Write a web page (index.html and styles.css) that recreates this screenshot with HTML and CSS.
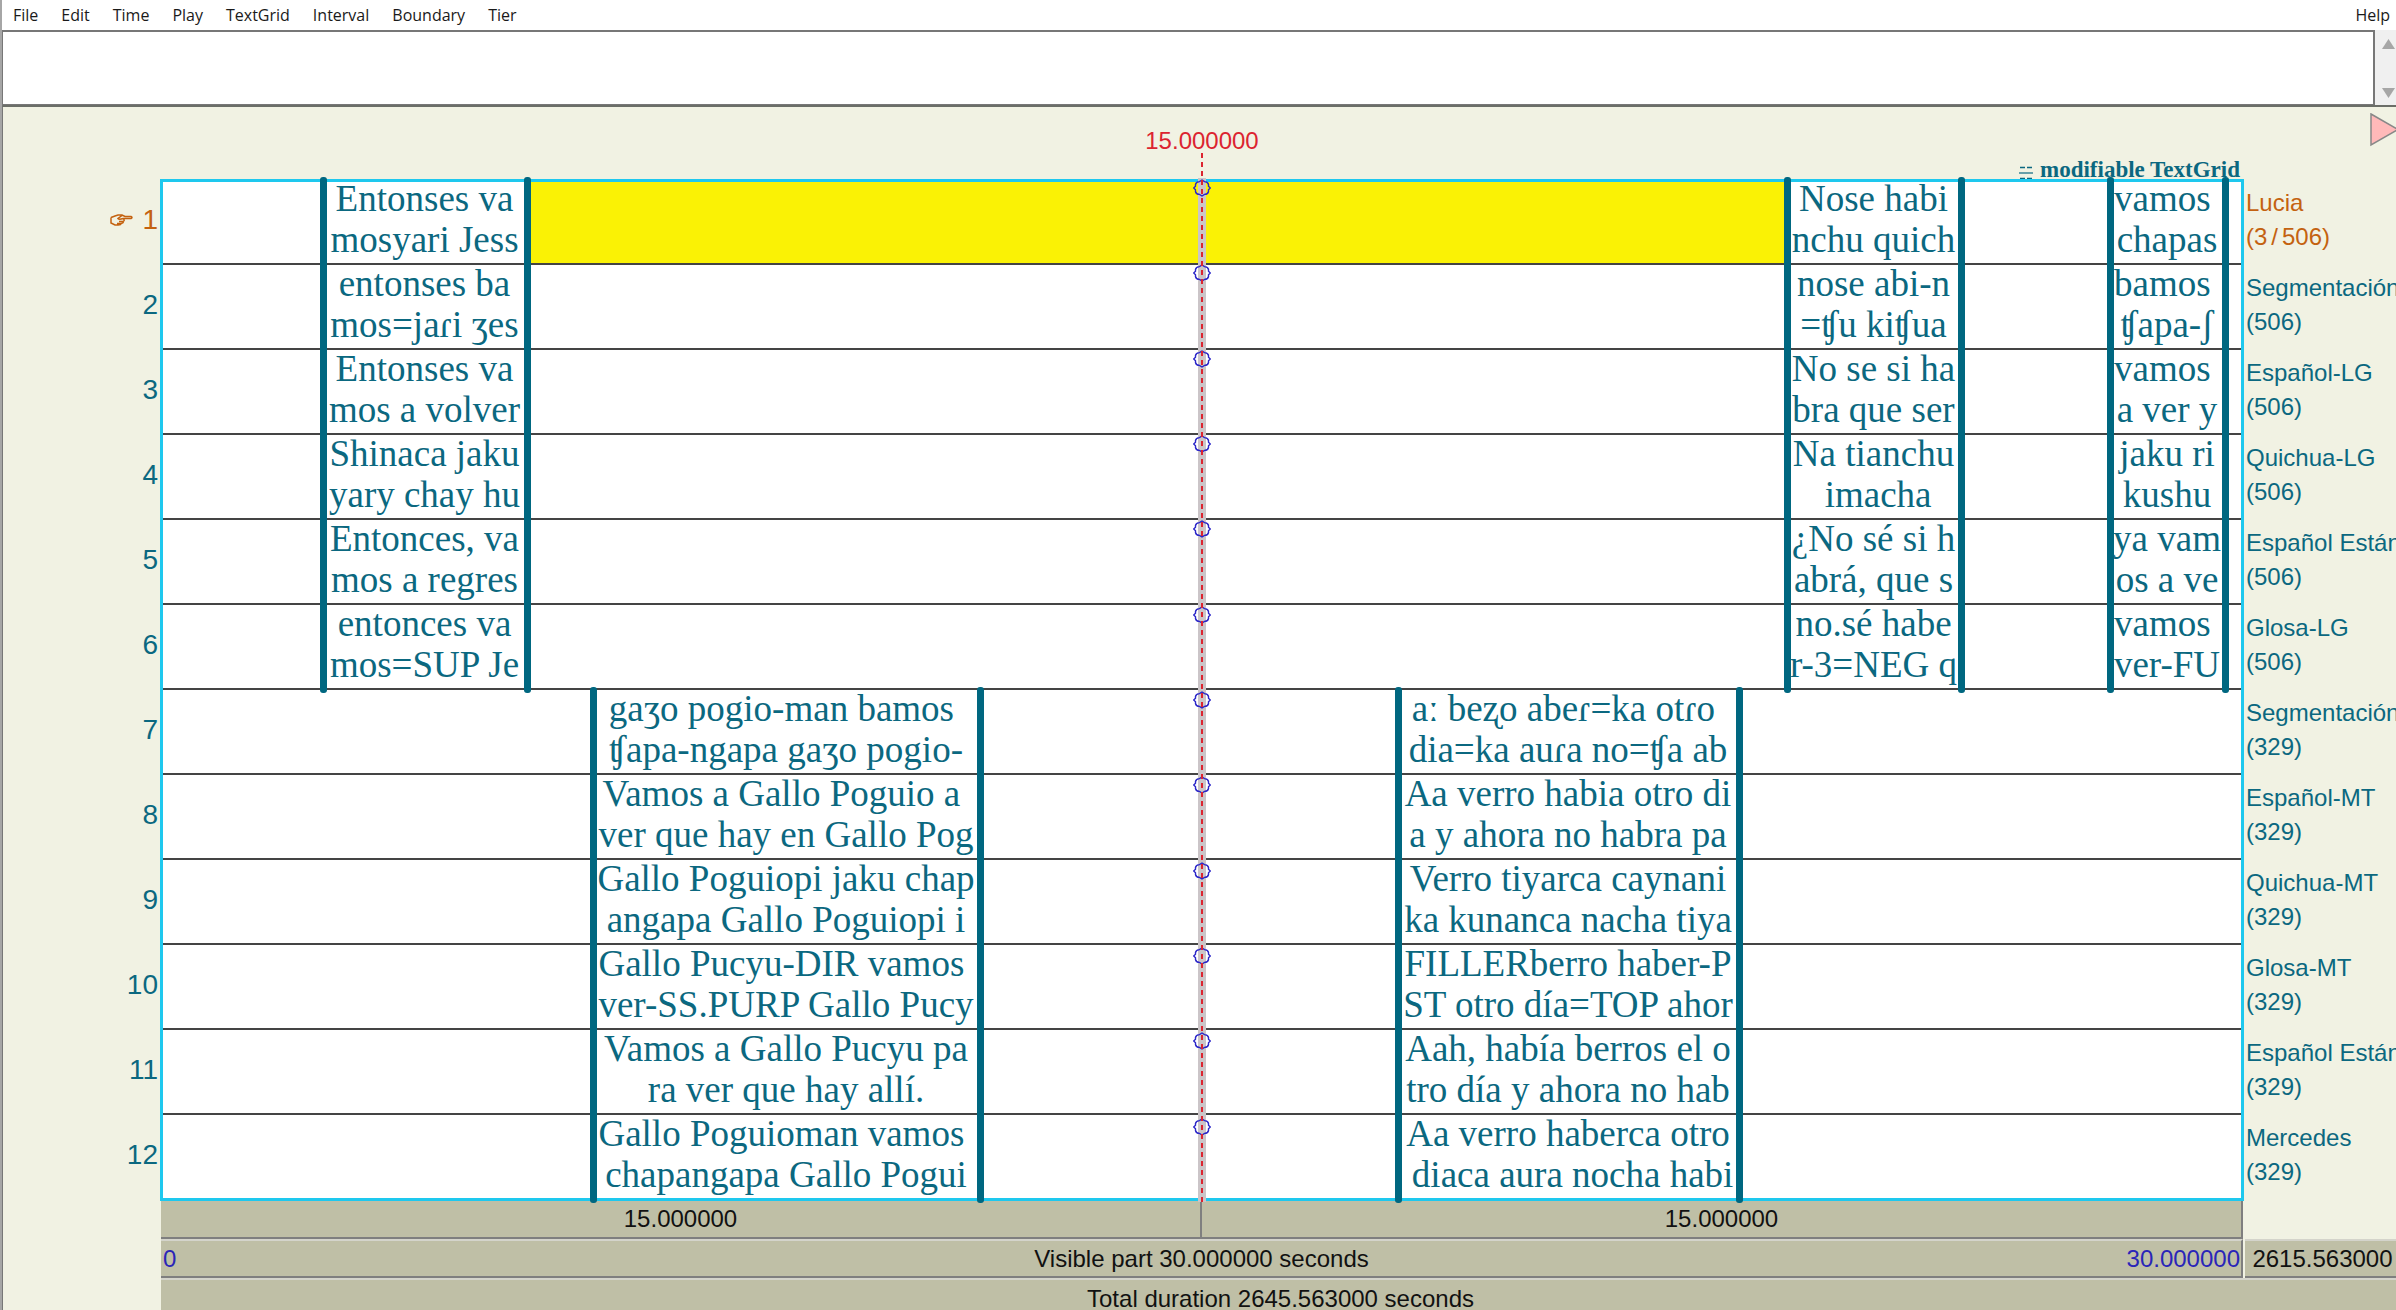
FILE: index.html
```html
<!DOCTYPE html>
<html lang="es">
<head>
<meta charset="utf-8">
<title>TextGrid</title>
<link rel="stylesheet" href="styles.css">
</head>
<body>
<svg width="0" height="0" class="symbols">
  <symbol id="knob" viewBox="0 0 18 18"><path d="M0.700 9L2.500 7.300V5.500Q3 2.800 6.500 2.600L9 1L11.500 2.600Q15 2.800 15.500 5.500V7.300L17.300 9L15.500 10.700V12.500Q15 15.200 11.500 15.400L9 17L6.500 15.400Q3 15.200 2.500 12.500V10.700Z" fill="none" stroke="#2a25c8" stroke-width="1.400"/></symbol>
</svg>
<nav class="menu">
  <button>File</button><button>Edit</button><button>Time</button><button>Play</button><button>TextGrid</button><button>Interval</button><button>Boundary</button><button>Tier</button><button class="menu-help">Help</button>
</nav>
<div class="text-row">
  <textarea class="label-text" aria-label="Interval text"></textarea>
  <div class="scroller">
    <button aria-label="Scroll up"><svg width="13" height="10" viewBox="0 0 13 10"><path d="M6.500 0L13 10H0z" fill="#a6a6a6"/></svg></button>
    <button aria-label="Scroll down"><svg width="13" height="10" viewBox="0 0 13 10"><path d="M0 0H13L6.500 10z" fill="#a6a6a6"/></svg></button>
  </div>
</div>
<main class="editor">
  <header class="plot-head">
    <span class="cursor-time">15.000000</span>
    <span class="grid-title"><svg width="14" height="14" viewBox="0 0 14 14" fill="none" stroke="#0b6880"><path d="M1 1.500H13M1 12.500H13" stroke-dasharray="5 2" stroke-width="1.500"/><path d="M0 7H14" stroke-width="2" opacity=".6"/></svg>modifiable TextGrid</span>
  </header>
  <button class="group-toggle" aria-label="Group"><svg width="28" height="34" viewBox="0 0 28 34"><path d="M1 1L28 16.500L1 32z" fill="#ffb9b9" stroke="#888" stroke-width="1.500"/></svg></button>
  <ol class="numbers">
    <li class="selected"><svg width="23" height="12" viewBox="0 0 23 12" fill="none" stroke="#c46210" stroke-width="1.500"><path d="M1 3.500L5 2L8 1H12L15 2.500H21Q23 3.500 21 4.500H13M12 1.500L8 4.500Q9 6 13 4.500M13 4.500Q15.500 6.500 13 7.500Q14 9 11 9.500Q11 11 8 11H5L1 9V3.500M9 7.500H13M7 9.500H11"/></svg>1</li>
    <li>2</li><li>3</li><li>4</li><li>5</li><li>6</li><li>7</li><li>8</li><li>9</li><li>10</li><li>11</li><li>12</li>
  </ol>
  <section class="plot">
    <div class="speaker lucia">
      <div class="tier"><p>Entonses va
mosyari Jess</p><p class="current"></p><p>Nose habi
nchu quich</p><p>vamos 
chapas</p></div>
      <div class="tier"><p>entonses ba
mos=jaɾi ʒes</p><p></p><p>nose abi-n
=ʧu kiʧua</p><p>bamos 
ʧapa-ʃ</p></div>
      <div class="tier"><p>Entonses va
mos a volver</p><p></p><p>No se si ha
bra que ser</p><p>vamos 
a ver y</p></div>
      <div class="tier"><p>Shinaca jaku
yary chay hu</p><p></p><p>Na tianchu
 imacha</p><p>jaku ri
kushu</p></div>
      <div class="tier"><p>Entonces, va
mos a regres</p><p></p><p>¿No sé si h
abrá, que s</p><p>ya vam
os a ve</p></div>
      <div class="tier"><p>entonces va
mos=SUP Je</p><p></p><p>no.sé habe
r-3=NEG q</p><p>vamos 
ver-FU</p></div>
      <div class="boundaries"><i></i><i></i><i></i><i></i><i></i><i></i></div>
    </div>
    <div class="speaker mercedes">
      <div class="tier"><p>gaʒo pogio-man bamos 
ʧapa-ngapa gaʒo pogio-</p><p>a<b>ː</b> beʐo abeɾ=ka otɾo 
dia=ka auɾa no=ʧa ab</p></div>
      <div class="tier"><p>Vamos a Gallo Poguio a 
ver que hay en Gallo Pog</p><p>Aa verro habia otro di
a y ahora no habra pa</p></div>
      <div class="tier"><p>Gallo Poguiopi jaku chap
angapa Gallo Poguiopi i</p><p>Verro tiyarca caynani
ka kunanca nacha tiya</p></div>
      <div class="tier"><p>Gallo Pucyu-DIR vamos 
ver-SS.PURP Gallo Pucy</p><p>FILLERberro haber-P
ST otro día=TOP ahor</p></div>
      <div class="tier"><p>Vamos a Gallo Pucyu pa
ra ver que hay allí.</p><p>Aah, había berros el o
tro día y ahora no hab</p></div>
      <div class="tier"><p>Gallo Poguioman vamos 
chapangapa Gallo Pogui</p><p>Aa verro haberca otro
 diaca aura nocha habi</p></div>
      <div class="boundaries"><i></i><i></i><i></i><i></i></div>
    </div>
    <div class="cursor">
      <svg><use href="#knob"/></svg><svg><use href="#knob"/></svg><svg><use href="#knob"/></svg><svg><use href="#knob"/></svg>
      <svg><use href="#knob"/></svg><svg><use href="#knob"/></svg><svg><use href="#knob"/></svg><svg><use href="#knob"/></svg>
      <svg><use href="#knob"/></svg><svg><use href="#knob"/></svg><svg><use href="#knob"/></svg><svg><use href="#knob"/></svg>
    </div>
  </section>
  <ul class="names">
    <li class="selected">Lucia<br>(3<span class="slash">/</span>506)</li>
    <li>Segmentación<br>(506)</li><li>Español-LG<br>(506)</li><li>Quichua-LG<br>(506)</li><li>Español Están<br>(506)</li><li>Glosa-LG<br>(506)</li>
    <li>Segmentación<br>(329)</li><li>Español-MT<br>(329)</li><li>Quichua-MT<br>(329)</li><li>Glosa-MT<br>(329)</li><li>Español Están<br>(329)</li><li>Mercedes<br>(329)</li>
  </ul>
  <div class="halves"><button class="bar">15.000000</button><button class="bar">15.000000</button></div>
  <button class="bar visible"><span class="time">0</span><span>Visible part 30.000000 seconds</span><span class="time">30.000000</span></button>
  <button class="bar rest">2615.563000</button>
  <button class="bar total">Total duration 2645.563000 seconds</button>
</main>
</body>
</html>
```
FILE: styles.css
```css
:root {
  --paper: #f1f2e3;
  --teal: #006780;
  --ink: #0b6880;
  --orange: #c46210;
  --bar: #bfbfa6;
}

* { box-sizing: border-box; margin: 0; padding: 0; }

body {
  display: flex;
  flex-direction: column;
  height: 100vh;
  overflow: hidden;
  background: var(--paper);
  border-left: 2px solid #a6a6a6;
  font-family: "Liberation Sans", Arial, sans-serif;
  font-size: 24px;
}

button { border: 0; background: none; font: inherit; color: inherit; }
ol, ul { list-style: none; }
svg { display: block; }
.symbols { position: absolute; }

.menu {
  flex: none;
  display: flex;
  gap: 23px;
  height: 30px;
  padding: 0 6px 0 11px;
  background: #fff;
  color: #1a1a1a;
  font-family: "Open Sans", "Noto Sans", sans-serif;
  font-size: 16px;
}
.menu-help { margin-left: auto; }

.text-row {
  flex: none;
  display: flex;
  height: 77px;
  background: #f0f0f0;
  border-left: 1px solid #777;
  border-bottom: 2px solid #6b6e68;
}
.label-text {
  flex: 1;
  border: 1px solid #777;
  border-width: 2px 2px 1px 0;
  background: #fff;
  resize: none;
  outline: none;
  font: inherit;
}
.scroller {
  width: 21px;
  display: flex;
  flex-direction: column;
  justify-content: space-between;
  padding: 9px 0 7px 7px;
}
.scroller button { height: 10px; }

.editor {
  flex: 1;
  min-height: 0;
  display: grid;
  grid-template-columns: 158px minmax(0, 1fr) 153px;
  grid-template-rows: 73px minmax(0, 1fr) 39px 39px 32px;
  border-left: 1px solid #777;
}

.plot-head {
  grid-column: 2;
  display: grid;
  grid-template-columns: 1fr auto 1fr;
  color: var(--ink);
}
.cursor-time {
  grid-column: 2;
  padding-top: 20px;
  line-height: 28px;
  color: #dc2430;
}
.grid-title {
  display: flex;
  align-items: center;
  justify-content: flex-end;
  gap: 7px;
  align-self: end;
  padding-right: 3px;
  line-height: 20px;
  font-family: "Liberation Serif", "Times New Roman", serif;
  font-weight: bold;
  font-size: 23px;
}
.grid-title svg { margin-top: 6px; }
.group-toggle {
  overflow: hidden;
  align-self: start;
  justify-self: end;
  width: 26px;
  margin-top: 6px;
}

.numbers, .names {
  display: grid;
  grid-template-rows: repeat(12, minmax(0, 1fr));
  color: var(--ink);
}
.numbers li {
  display: flex;
  align-items: center;
  justify-content: flex-end;
  gap: 9px;
  padding: 0 3px 5px 0;
  font-size: 28px;
}
.names li {
  display: flow-root;
  align-content: center;
  padding: 0 0 5px 3px;
  line-height: 34px;
  white-space: nowrap;
}
.numbers .selected, .names .selected { color: var(--orange); }
.slash { padding: 0 4px; }

.plot {
  position: relative;
  display: grid;
  grid-template-rows: repeat(2, minmax(0, 1fr));
  background: #fff;
  color: var(--ink);
  font-family: "Liberation Serif", "Times New Roman", serif;
  font-size: 37px;
}
.plot::after {
  content: "";
  position: absolute;
  inset: -1px;
  border: 3px solid #1ec8ee;
}
.speaker {
  position: relative;
  display: grid;
  grid-template-rows: repeat(6, minmax(0, 1fr));
}
.lucia { --spans: 163fr 204fr 1260fr 174fr 149fr 115fr 17fr; }
.mercedes { --spans: 433fr 387fr 418fr 341fr 503fr; }
.tier, .boundaries {
  display: grid;
  grid-template-columns: var(--spans);
  grid-template-rows: minmax(0, 1fr);
}
.tier { border-bottom: 2px solid #444; }
.tier p {
  align-content: center;
  min-width: 0;
  margin-top: -2px;
  padding: 0 3px 3px 0;
  line-height: 41px;
  text-align: center;
  white-space: pre;
}
.lucia p:nth-child(1), .mercedes p:nth-child(1) { grid-column: 2; }
.lucia p:nth-child(2) { grid-column: 3; }
.lucia p:nth-child(3) { grid-column: 4; }
.lucia p:nth-child(4) { grid-column: 6; }
.mercedes p:nth-child(2) { grid-column: 4; }
.tier .current { margin-top: 0; background: #faf205; }

.boundaries {
  position: absolute;
  inset: -3px 0;
  z-index: 2;
}
.boundaries i {
  width: 7px;
  margin-left: -4px;
  border-radius: 3px;
  background: var(--teal);
}
.boundaries i:first-child { grid-column-start: 2; }

.cursor {
  position: absolute;
  z-index: 3;
  top: -2px;
  bottom: -2px;
  left: 50%;
  width: 18px;
  margin-left: -9px;
  display: grid;
  grid-template-rows: repeat(12, minmax(0, 1fr));
  background: linear-gradient(#cbc5c8, #cbc5c8) center / 8px 100% no-repeat;
}
.cursor::after {
  content: "";
  position: absolute;
  inset: -25px 8px 0;
  background: repeating-linear-gradient(#dc2430 0 5px, transparent 5px 9px);
}
.cursor svg {
  width: 18px;
  height: 18px;
  margin-top: 1px;
}

.bar {
  background: var(--bar);
  color: #111;
  border-bottom: 2px solid #7f7f7f;
  line-height: 28px;
}
.halves { grid-column: 2; display: grid; grid-template-columns: 1fr 1fr; }
.halves .bar { border-right: 2px solid #7f7f7f; }
.visible {
  grid-column: 2;
  display: grid;
  grid-template-columns: 1fr auto 1fr;
  align-items: center;
  padding: 0 1px 0 2px;
  border-top: 2px solid #d4d4cb;
  border-right: 2px solid #7f7f7f;
}
.time { color: #2a25b8; text-align: left; }
.time:last-child { text-align: right; }
.rest {
  margin-left: 2px;
  padding-left: 4px;
  border-top: 2px solid #d4d4cb;
}
.total {
  grid-column: 2 / 4;
  padding: 8px 0 0 4px;
  border-top: 2px solid #d4d4cb;
  border-bottom: 0;
  line-height: 22px;
}
```
